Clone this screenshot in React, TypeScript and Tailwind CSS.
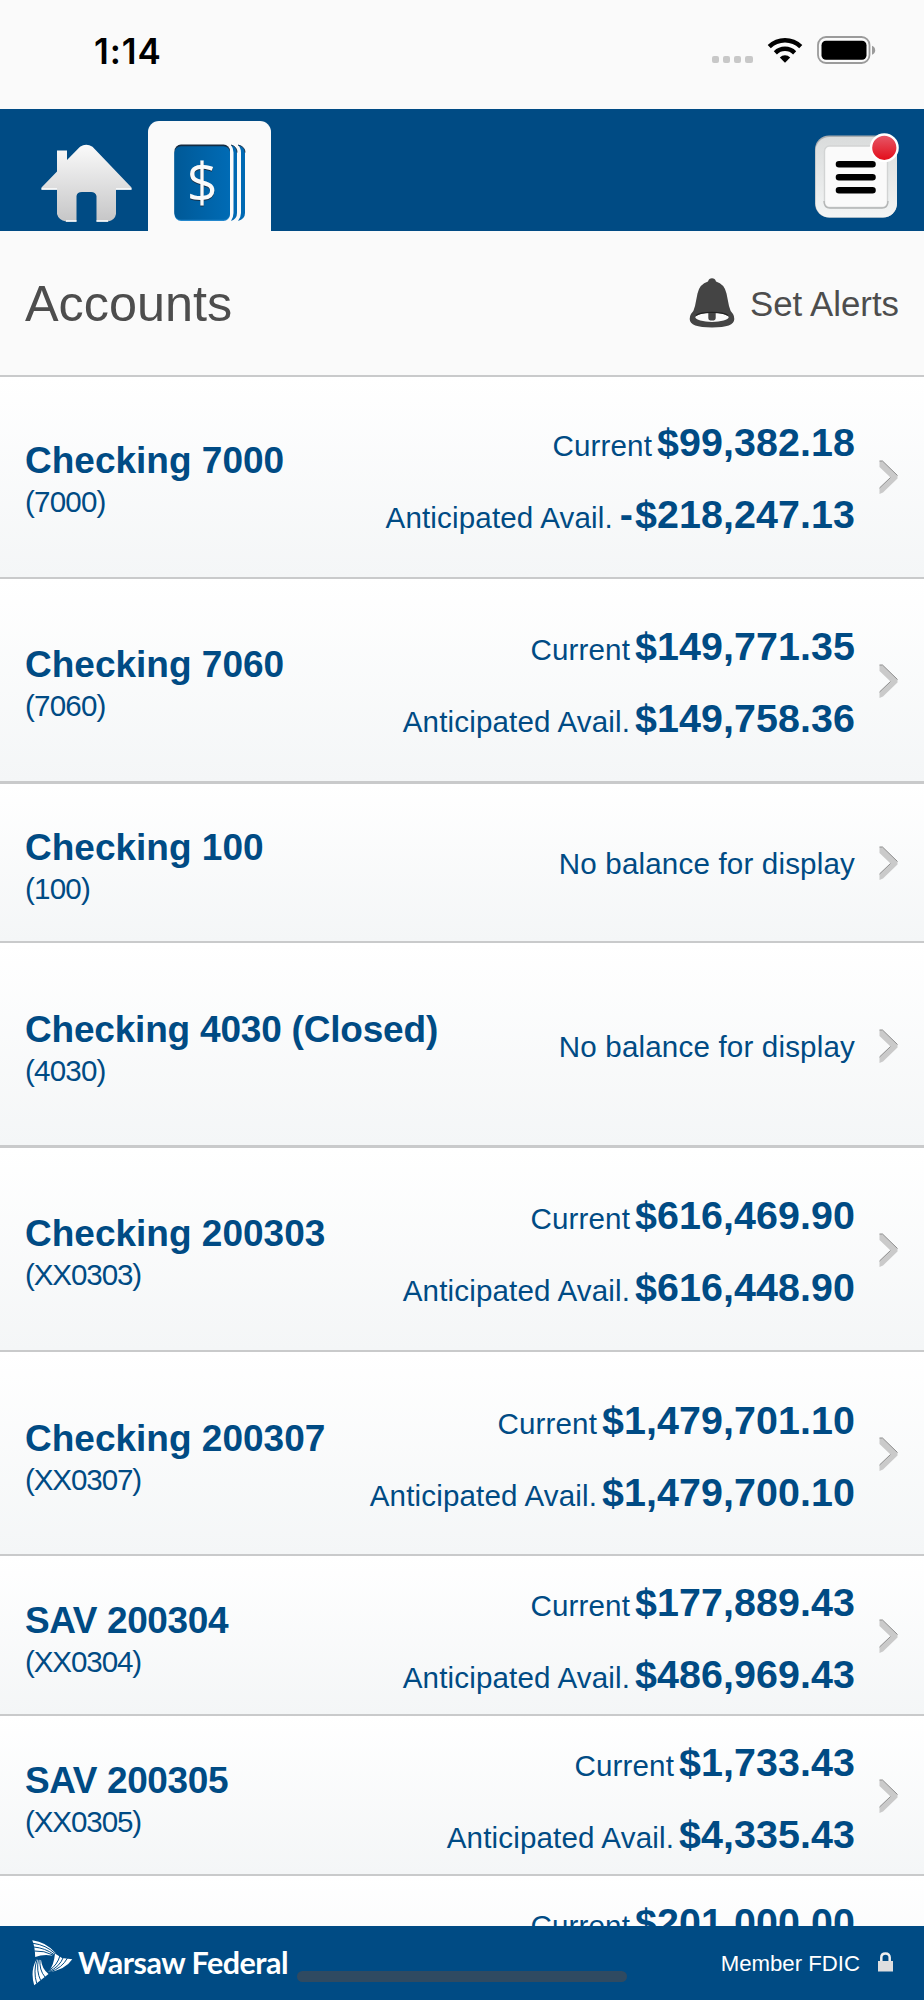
import type { ReactNode } from "react";

interface Account {
  name: string;
  mask: string;
  current?: string;
  available?: string;
  rowClass: string;
  nameClass?: string;
  maskClass?: string;
}

const accounts: Account[] = [
  { name: "Checking 7000", mask: "(7000)", current: "$99,382.18", available: "-$218,247.13", rowClass: "h-[202px] border-b-2" },
  { name: "Checking 7060", mask: "(7060)", current: "$149,771.35", available: "$149,758.36", rowClass: "h-[205px] border-b-3 pt-[2px]" },
  { name: "Checking 100", mask: "(100)", rowClass: "h-[159px] border-b-2 pt-[2px]" },
  { name: "Checking 4030 (Closed)", mask: "(4030)", rowClass: "h-[205px] border-b-3 pt-[4px]", nameClass: "tracking-[-0.2px]" },
  { name: "Checking 200303", mask: "(XX0303)", current: "$616,469.90", available: "$616,448.90", rowClass: "h-[204px] border-b-2 pt-[2px]", maskClass: "tracking-[-1.1px]" },
  { name: "Checking 200307", mask: "(XX0307)", current: "$1,479,701.10", available: "$1,479,700.10", rowClass: "h-[204px] border-b-2 pt-[3px]", maskClass: "tracking-[-1.1px]" },
  { name: "SAV 200304", mask: "(XX0304)", current: "$177,889.43", available: "$486,969.43", rowClass: "h-[160px] border-b-2 pt-[3px]", nameClass: "tracking-[-0.4px]", maskClass: "tracking-[-1.1px]" },
  { name: "SAV 200305", mask: "(XX0305)", current: "$1,733.43", available: "$4,335.43", rowClass: "h-[160px] border-b-2 pt-[3px]", nameClass: "tracking-[-0.4px]", maskClass: "tracking-[-1.1px]" },
  { name: "", mask: "", current: "$201,000.00", available: "", rowClass: "h-[160px] border-b-2 pt-[3px]" },
];

function StatusBar() {
  return (
    <div className="flex h-[109px] shrink-0 items-start justify-between pt-[34px] pr-[47px] pl-[94px]">
      <span className="font-[Inter] text-[35px] leading-[34px] font-semibold tracking-[0.9px] text-black">1:14</span>
      <div className="flex items-start">
        <div className="mt-[22px] flex gap-[4px]">
          <span className="h-[7px] w-[7px] rounded-[2px] bg-[#c8c8c8]" />
          <span className="h-[7px] w-[7px] rounded-[2px] bg-[#c8c8c8]" />
          <span className="h-[7px] w-[7px] rounded-[2px] bg-[#c8c8c8]" />
          <span className="h-[7px] w-[8px] rounded-[2px] bg-[#c8c8c8]" />
        </div>
        <svg className="mt-[3px] ml-[14px]" width="36" height="27" viewBox="0 0 36 27">
          <path d="M0.7 8.1A24.6 24.6 0 0 1 35.3 8.1L32.2 11.3A20.2 20.2 0 0 0 3.8 11.3Z" />
          <path d="M6.8 14.2A15.9 15.9 0 0 1 29.2 14.2L26.1 17.4A11.5 11.5 0 0 0 9.9 17.4Z" />
          <path d="M12.8 20.4A7.6 7.6 0 0 1 23.2 20.4L18 25.8Z" />
        </svg>
        <svg className="mt-[2px] ml-[14px]" width="60" height="28" viewBox="0 0 60 28">
          <rect x="1" y="1" width="51.5" height="26" rx="8" fill="none" stroke="#9b9b9b" strokeWidth="1.8" />
          <rect x="4.5" y="4.7" width="45" height="19" rx="4.5" />
          <path d="M55 9.8Q58.2 11.2 58.2 14.3Q58.2 17.4 55 18.8Z" fill="#9b9b9b" />
        </svg>
      </div>
    </div>
  );
}

function HomeIcon() {
  return (
    <svg className="mt-[35px] ml-[41px]" width="92" height="79" viewBox="0 0 92 79">
      <defs>
        <linearGradient id="house" x1="0" y1="0" x2="0" y2="1">
          <stop offset="0" stopColor="#fafafa" />
          <stop offset="1" stopColor="#c6c6c7" />
        </linearGradient>
      </defs>
      <path
        d="M39 2.8Q45.2-1.5 51.5 2.8L90.5 43.5V45.5H75V70Q74 76 67 77.5H55.5V52Q54.5 48 50 48H41Q36 48 35.5 52V77.5H25Q17.5 76 16 70V45.5H0.5V43.5L16 27.5V6.5H26V16Z"
        fill="url(#house)"
      />
      <path d="M0.5 45H16M75 45H90.5M25 77H35.5M55.5 77H67" stroke="#fff" strokeWidth="1.4" />
    </svg>
  );
}

function AccountsIcon() {
  return (
    <svg className="absolute top-[23px] left-[26px]" width="72" height="79" viewBox="0 0 72 79">
      <defs>
        <linearGradient id="book" x1="0" y1="0" x2="1" y2="0">
          <stop offset="0" stopColor="#005997" />
          <stop offset="1" stopColor="#006bb5" />
        </linearGradient>
      </defs>
      <rect x="0.5" y="0.5" width="55.5" height="74" rx="6.5" fill="#152b40" />
      <rect x="0.5" y="3" width="55.5" height="74" rx="6.5" fill="#2387cd" />
      <rect x="0.5" y="2.2" width="55.5" height="73.6" rx="6.5" fill="url(#book)" />
      <path d="M57 1Q63 2.5 63 8.5V69Q63 75 57 77Q59.5 73 59.5 69V8.5Q59.5 4 57 1Z" fill="#0069b3" />
      <path d="M64 1Q71 2.5 71 8.5V69Q71 75 64 77Q67 73 67 69V8.5Q67 4 64 1Z" fill="#0069b3" />
      <path d="M57 1Q63 2.5 63 8.5M64 1Q71 2.5 71 8.5" fill="none" stroke="#17344f" />
      <text x="28.3" y="58.7" textAnchor="middle" className="font-['Open_Sans'] text-[54px] font-medium" fill="#172c40">$</text>
      <text x="28.3" y="57.5" textAnchor="middle" className="font-['Open_Sans'] text-[54px] font-medium" fill="#fafafa">$</text>
    </svg>
  );
}

function MenuButton() {
  return (
    <svg className="mt-[24px] mr-[25px]" width="87" height="87" viewBox="0 0 87 87">
      <defs>
        <linearGradient id="frame" x1="0" y1="0" x2="0" y2="1">
          <stop offset="0" stopColor="#dadcdc" />
          <stop offset="1" stopColor="#f3f5f5" />
        </linearGradient>
        <linearGradient id="badge" x1="0" y1="0" x2="0" y2="1">
          <stop offset="0" stopColor="#e65b6b" />
          <stop offset="1" stopColor="#e30a17" />
        </linearGradient>
      </defs>
      <rect x="3" y="2.5" width="82" height="82" rx="14" fill="#a9adb0" />
      <rect x="3.5" y="4" width="81.5" height="80.5" rx="14" fill="url(#frame)" />
      <rect x="12.5" y="13" width="63" height="61.5" rx="5" fill="#fafafa" stroke="#d2d4d4" strokeWidth="1.4" />
      <path d="M12 68Q12 75 18 75H70Q76 75 76 68" fill="none" stroke="#b4b6b6" strokeWidth="1.4" />
      <path d="M27 31.3H60.5M27 44.3H60.5M27 57.3H60.5" stroke="#000" strokeWidth="6.6" strokeLinecap="round" />
      <circle cx="72.3" cy="14.8" r="13.3" fill="url(#badge)" stroke="#fff" strokeWidth="2.4" />
    </svg>
  );
}

function NavBar() {
  return (
    <div className="flex h-[122px] shrink-0 items-start bg-[#004b84]">
      <HomeIcon />
      <div className="relative mt-[12px] ml-[15px] h-[110px] w-[123px] rounded-t-[11px] bg-[#fafafa]">
        <AccountsIcon />
      </div>
      <div className="ml-auto">
        <MenuButton />
      </div>
    </div>
  );
}

function BellIcon() {
  return (
    <svg width="46" height="50" viewBox="0 0 46 50">
      <path
        d="M23 0.3Q26 0.3 27 3.5Q35.5 6 37.5 15.5L40 28Q41 33 44 36Q45.3 38 45.3 41Q45.3 49.5 23 49.5T0.7 41Q0.7 38 2 36Q5 33 6 28L8.5 15.5Q10.5 6 19 3.5Q20 0.3 23 0.3Z"
        fill="#444"
      />
      <ellipse cx="23" cy="39.3" rx="16.5" ry="4.6" fill="#fafafa" />
      <path d="M7 37.5Q11 34.4 23 34.4T39 37.5" fill="none" stroke="#222" strokeWidth="1.2" />
      <path d="M19.3 35H26.7V40Q26.7 42.6 23 42.6T19.3 40Z" fill="#444" />
    </svg>
  );
}

function Chevron() {
  return (
    <svg width="20" height="35" viewBox="0 0 20 35">
      <path d="M0.5 1H3.5L18.5 15.5V18.5L4 32.5L0.5 34V28L11.5 17.5L0.5 7Z" fill="#cacaca" />
      <path d="M0.5 1H3.5L18.5 15.5M0.5 28L11.5 17.5" fill="none" stroke="#8e8e8e" strokeWidth="1" />
    </svg>
  );
}

function BalanceLine({ label, children }: { label: string; children: ReactNode }) {
  return (
    <div className="flex h-[72px] items-baseline justify-end gap-[5px] leading-[72px]">
      <span className="text-[29.57px] tracking-[0.15px]">{label}</span>
      <span className="text-[39.4px] font-bold tracking-[0.08px]">{children}</span>
    </div>
  );
}

// The minus sign sits a little apart from its label and its amount.
function Amount({ value }: { value: string }) {
  if (!value.startsWith("-")) return <>{value}</>;
  return (
    <>
      <span className="mr-[2px] ml-[2px]">-</span>
      {value.slice(1)}
    </>
  );
}

function AccountRow({ account }: { account: Account }) {
  return (
    <div
      className={`${account.rowClass} flex shrink-0 items-center border-[#c9cacb] bg-linear-to-b from-white to-[#f4f6f7] px-[25px] whitespace-nowrap text-[#004b84]`}
    >
      <div className="mt-[9px]">
        <div className={`text-[37px] leading-[41px] font-bold ${account.nameClass ?? ""}`}>{account.name}</div>
        <div className={`text-[29.57px] leading-[42px] ${account.maskClass ?? "tracking-[-0.8px]"}`}>{account.mask}</div>
      </div>
      <div className="mt-[2px] mr-[24px] ml-auto">
        {account.current ? (
          <>
            <BalanceLine label="Current">
              <Amount value={account.current} />
            </BalanceLine>
            {account.available ? (
              <BalanceLine label="Anticipated Avail.">
                <Amount value={account.available} />
              </BalanceLine>
            ) : (
              <div className="h-[72px]" />
            )}
          </>
        ) : (
          <div className="text-[29.57px] tracking-[0.17px]">No balance for display</div>
        )}
      </div>
      <Chevron />
    </div>
  );
}

function FooterLogo() {
  return (
    <svg width="42" height="46" viewBox="0 0 42 46">
      <g fill="#fff">
        <path d="M0.3 0.3Q14 2 23.500 13L20 15.500Q11 14 3.200 17Q3 7 0.300 0.300Z" />
        <path d="M23 13.500L30 18L40.300 19.200Q33 30 16.500 32Q22 25 23 13.500Z" />
        <path d="M4.500 19.500Q-2 31 2.200 45.200L16.500 34Q10 29 9 20Z" />
      </g>
      <g fill="none" stroke="#004b84" strokeWidth="1">
        <path d="M1 3.300Q14 5 23 13.500M1.800 7Q13 8 22 14.500M2.500 11Q12 10.500 21 15" />
        <path d="M28 15.500Q25.500 25 17 30.500M31.500 17Q27.500 27 17 31.500M35.500 18Q30 28 18 32" />
        <path d="M5.200 19Q1 31 4.700 43.500M6.500 19Q4 31 8.700 40.500M8 19Q7 30 13 37" />
      </g>
    </svg>
  );
}

function LockIcon() {
  return (
    <svg width="15" height="20" viewBox="0 0 15 20">
      <path d="M3.300 10V5.500Q3.300 1.600 7.500 1.600T11.700 5.500V10" fill="none" stroke="#eee" strokeWidth="2.500" />
      <rect y="9" width="15" height="10.500" fill="#dededf" />
    </svg>
  );
}

function Footer() {
  return (
    <footer className="relative flex h-[74px] shrink-0 items-start bg-[#004b84] text-white">
      <div className="mt-[14px] ml-[32px]">
        <FooterLogo />
      </div>
      <span className="mt-[16px] ml-[4px] font-[Lato] text-[30.5px] leading-[40px] font-bold tracking-[-0.5px] whitespace-nowrap">
        Warsaw Federal
      </span>
      <span className="mt-[25px] ml-auto text-[22.2px] leading-[26px]">Member FDIC</span>
      <div className="mt-[26px] mr-[31px] ml-[18px]">
        <LockIcon />
      </div>
      <div className="absolute bottom-[18px] left-[297px] h-[11px] w-[330px] rounded-full bg-[#2f4a61]" />
    </footer>
  );
}

export default function App() {
  return (
    <div className="flex h-[2000px] w-[924px] flex-col overflow-hidden bg-[#fafafa] font-['Liberation_Sans',sans-serif]">
      <StatusBar />
      <NavBar />
      <div className="flex h-[146px] shrink-0 items-center border-b-2 border-[#c9cacb] px-[25px] text-[#4d4d4d]">
        <h1 className="mt-[2px] text-[50.4px] leading-[60px]">Accounts</h1>
        <div className="ml-auto flex items-center gap-[15px]">
          <BellIcon />
          <span className="mt-[2px] text-[34.8px] leading-[40px]">Set Alerts</span>
        </div>
      </div>
      <div className="min-h-0 flex-1 overflow-hidden">
        {accounts.map((account) => (
          <AccountRow key={account.mask} account={account} />
        ))}
      </div>
      <Footer />
    </div>
  );
}
